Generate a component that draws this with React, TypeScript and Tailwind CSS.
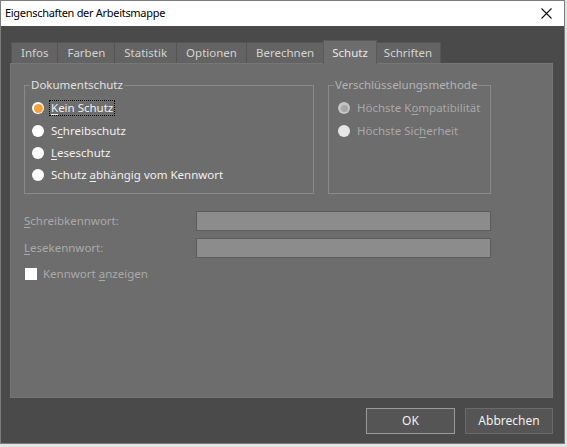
import React from 'react';

const font = { fontFamily: '"Segoe UI", "Noto Sans", sans-serif' };

// Buchstabe mit Unterstrich (Zugriffstaste)
const Mn: React.FC<{ text: string; at: number }> = ({ text, at }) => (
  <>
    {text.slice(0, at)}
    <span className="underline underline-offset-2">{text[at]}</span>
    {text.slice(at + 1)}
  </>
);

const Radio: React.FC<{ checked?: boolean; disabled?: boolean }> = ({ checked, disabled }) => {
  if (disabled) {
    return (
      <span className={`w-[12px] h-[12px] rounded-full flex items-center justify-center ${checked ? 'bg-[#c4c4c4]' : 'bg-[#e6e6e6]'}`}>
        {checked && <span className="w-[7px] h-[7px] rounded-full bg-[#a6a6a6]" />}
      </span>
    );
  }
  return (
    <span className="w-[12px] h-[12px] rounded-full bg-white flex items-center justify-center">
      {checked && <span className="w-[9px] h-[9px] rounded-full bg-[#f4a03c]" />}
    </span>
  );
};

const tabs = ['Infos', 'Farben', 'Statistik', 'Optionen', 'Berechnen', 'Schutz', 'Schriften'];

export default function App() {
  return (
    <div className="w-[567px] h-[447px] bg-[#e4e4e4] text-[11.5px]" style={font}>
      <div className="w-[565px] h-[444px] border border-[#7c7c7c] flex flex-col">
        {/* Titelleiste */}
        <div className="h-[25px] bg-white flex items-center justify-between pl-[4px] pr-[12px]">
          <span className="text-black text-[11px] tracking-[-0.3px]">Eigenschaften der Arbeitsmappe</span>
          <svg width="11" height="11" viewBox="0 0 11 11">
            <path d="M0.5 0.5 L10.5 10.5 M10.5 0.5 L0.5 10.5" stroke="#111" strokeWidth="1.1" />
          </svg>
        </div>

        <div className="flex-1 bg-[#4a4a4a] flex flex-col px-[9px] pt-[14px] pb-[9px]">
          {/* Reiter */}
          <div className="flex items-end h-[23px] pl-[1px]">
            {tabs.map((t) =>
              t === 'Schutz' ? (
                <div
                  key={t}
                  className="h-[24px] -mb-[1px] -mx-[1px] px-[8px] flex items-center bg-[#6d6d6d] border border-b-0 border-[#5a5a5a] text-[#e8e8e8] relative z-10"
                >
                  {t}
                </div>
              ) : (
                <div
                  key={t}
                  className={`h-[21px] ${t === 'Schriften' ? 'px-[8px]' : 'px-[9px]'} flex items-center bg-[#636363] border border-b-0 border-[#555] text-[#d4d4d4] -ml-px first:ml-0`}
                >
                  {t}
                </div>
              )
            )}
          </div>

          {/* Inhalt */}
          <div className="h-[335px] bg-[#6d6d6d] border border-[#767676] mr-[2px] px-[13px] pt-[14px]">
            <div className="flex gap-[14px]">
              <fieldset className="w-[290px] h-[116px] border border-[#8a8a8a] px-[5px] pt-[5px] relative">
                <legend className="px-[1px] text-[#e0e0e0] leading-[14px]">Dokumentschutz</legend>
                <div className="flex flex-col text-[#f0f0f0] pl-[2px]">
                  <label className="flex items-center gap-[6px] h-[22px]">
                    <Radio checked />
                    <span className="outline outline-1 outline-dotted outline-black px-[1px] leading-[14px]">
                      <Mn text="Kein Schutz" at={0} />
                    </span>
                  </label>
                  <label className="flex items-center gap-[7px] h-[23px]">
                    <Radio />
                    <span><Mn text="Schreibschutz" at={1} /></span>
                  </label>
                  <label className="flex items-center gap-[7px] h-[22px]">
                    <Radio />
                    <span><Mn text="Leseschutz" at={0} /></span>
                  </label>
                  <label className="flex items-center gap-[7px] h-[22px]">
                    <Radio />
                    <span><Mn text="Schutz abhängig vom Kennwort" at={7} /></span>
                  </label>
                </div>
              </fieldset>

              <fieldset className="w-[163px] h-[116px] border border-[#8a8a8a] px-[5px] pt-[5px]">
                <legend className="px-[1px] text-[#b4b4b4] leading-[14px]">Verschlüsselungsmethode</legend>
                <div className="flex flex-col text-[#a9a9a9] pl-[4px]">
                  <label className="flex items-center gap-[7px] h-[22px]">
                    <Radio checked disabled />
                    <span><Mn text="Höchste Kompatibilität" at={9} /></span>
                  </label>
                  <label className="flex items-center gap-[7px] h-[23px]">
                    <Radio disabled />
                    <span><Mn text="Höchste Sicherheit" at={11} /></span>
                  </label>
                </div>
              </fieldset>
            </div>

            <div className="mt-[17px] flex flex-col gap-[7px] text-[#aaaaaa]">
              <div className="flex items-center h-[20px]">
                <span className="w-[172px]"><Mn text="Schreibkennwort:" at={0} /></span>
                <div className="w-[295px] h-[20px] bg-[#8c8c8c] border border-[#5c5c5c]" />
              </div>
              <div className="flex items-center h-[20px]">
                <span className="w-[172px]"><Mn text="Lesekennwort:" at={0} /></span>
                <div className="w-[295px] h-[20px] bg-[#8c8c8c] border border-[#5c5c5c]" />
              </div>
              <label className="flex items-center gap-[6px] h-[18px] pl-[1px]">
                <span className="w-[12px] h-[12px] bg-white" />
                <span><Mn text="Kennwort anzeigen" at={9} /></span>
              </label>
            </div>
          </div>

          {/* Schaltflächen */}
          <div className="flex justify-end gap-[10px] mt-[10px] mr-[2px] text-[12px]">
            <button className="w-[89px] h-[26px] bg-[#555555] border border-[#9a9a9a] text-[#f0f0f0]">OK</button>
            <button className="w-[88px] h-[26px] bg-[#555555] border border-[#6a6a6a] text-[#f0f0f0]">Abbrechen</button>
          </div>
        </div>
      </div>
    </div>
  );
}
